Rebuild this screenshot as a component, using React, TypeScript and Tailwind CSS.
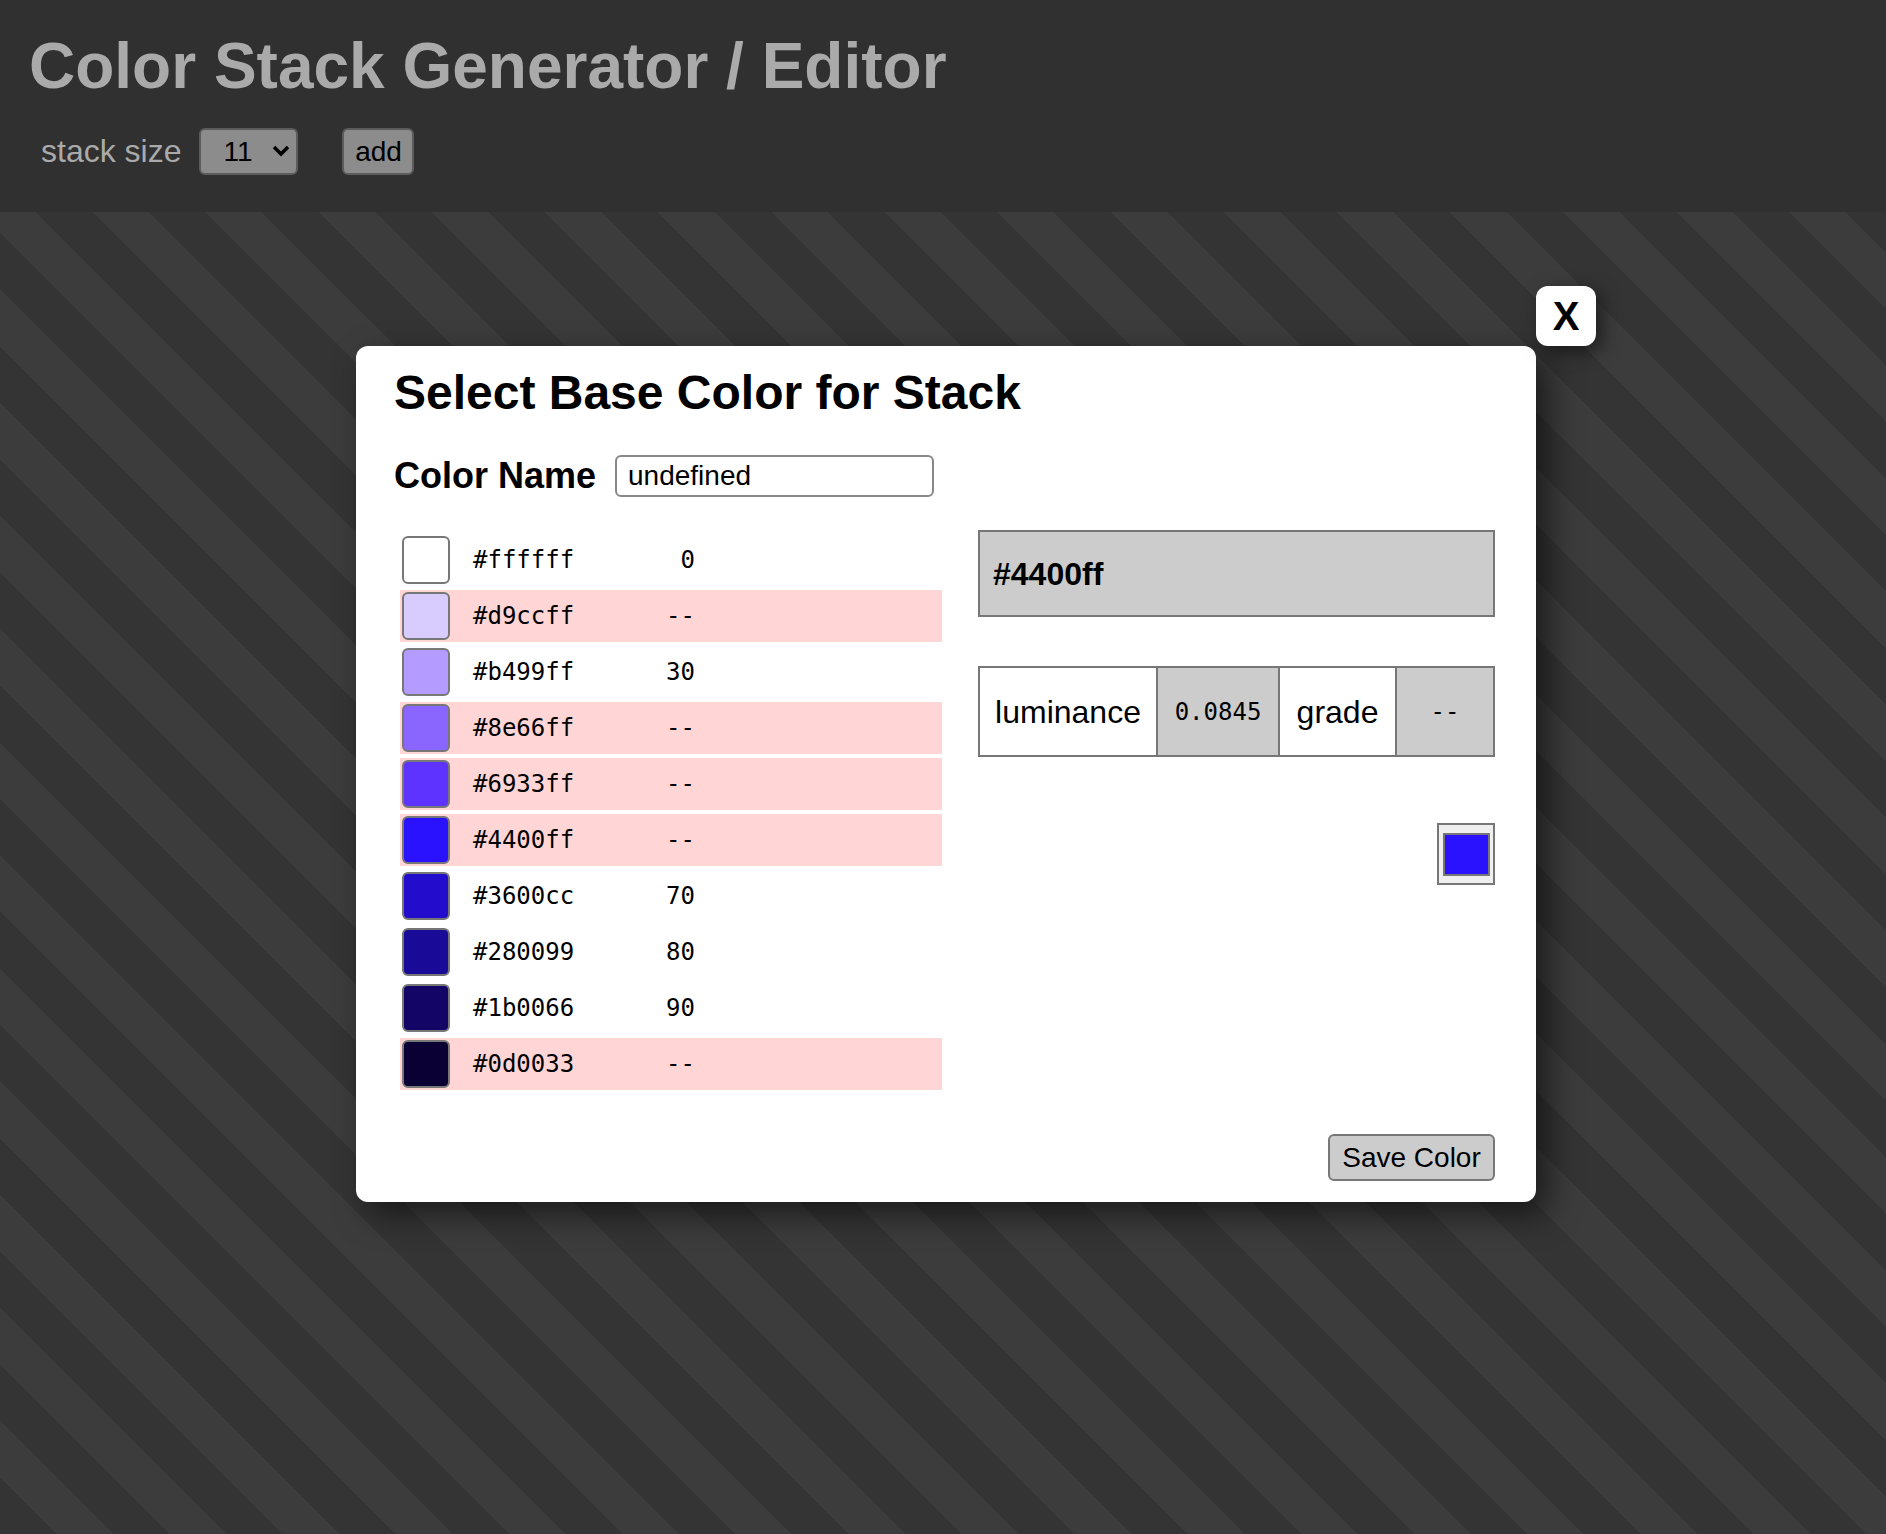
const stack = [
  { hex: "#ffffff", shown: "#ffffff", grade: "0", bad: false },
  { hex: "#d9ccff", shown: "#d8ccff", grade: "--", bad: true },
  { hex: "#b499ff", shown: "#b39bff", grade: "30", bad: false },
  { hex: "#8e66ff", shown: "#8a66ff", grade: "--", bad: true },
  { hex: "#6933ff", shown: "#5e33ff", grade: "--", bad: true },
  { hex: "#4400ff", shown: "#2b12ff", grade: "--", bad: true },
  { hex: "#3600cc", shown: "#230ccb", grade: "70", bad: false },
  { hex: "#280099", shown: "#1a0a98", grade: "80", bad: false },
  { hex: "#1b0066", shown: "#130566", grade: "90", bad: false },
  { hex: "#0d0033", shown: "#0a0033", grade: "--", bad: true },
];

function StackRow({ row }: { row: (typeof stack)[number] }) {
  return (
    <div
      className={`flex h-[52px] items-center ${row.bad ? "bg-[#ffd5d5]" : ""}`}
    >
      <div
        className="ml-[2px] h-[48px] w-[48px] rounded-[6px] border-2 border-[#777]"
        style={{ backgroundColor: row.shown }}
      />
      <span className="ml-[23px] w-[160px] text-[24px]">{row.hex}</span>
      <span className="w-[62px] text-right text-[24px]">{row.grade}</span>
    </div>
  );
}

export default function App() {
  return (
    <div className="flex min-h-screen flex-col bg-[#303030] font-['Liberation_Sans',Arial,sans-serif]">
      <header className="h-[212px] shrink-0 bg-[#303030] pl-[29px] pt-[34px]">
        <h1 className="text-[64px] font-bold leading-[64px] text-[#aaa]">
          Color Stack Generator / Editor
        </h1>
        <div className="mt-[30px] flex items-center pl-[12px]">
          <span className="text-[32px] leading-[47px] text-[#aaa]">stack size</span>
          <div className="relative ml-[18px]">
            <select
              defaultValue="11"
              className="h-[47px] w-[99px] appearance-none rounded-[6px] border-2 border-[#5c5c5c] bg-[#8c8c8c] pl-[22px] text-[28px] text-black outline-none"
            >
              <option value="11">11</option>
            </select>
            <svg
              className="pointer-events-none absolute right-[8px] top-[17px]"
              width="18"
              height="12"
              viewBox="0 0 18 12"
            >
              <path d="M2 2 L9 9 L16 2" fill="none" stroke="#000" strokeWidth="3.5" />
            </svg>
          </div>
          <button className="ml-[44px] h-[47px] w-[72px] rounded-[6px] border-2 border-[#5c5c5c] bg-[#8c8c8c] text-[28px] text-black">
            add
          </button>
        </div>
      </header>

      <main className="flex flex-1 justify-center bg-[repeating-linear-gradient(45deg,#343434_0px,#343434_40px,#3c3c3c_40px,#3c3c3c_80px)] pb-[160px] pl-[6px] pt-[134px]">
        <div className="relative h-fit">
          <button className="absolute right-[-60px] top-[-60px] flex h-[60px] w-[60px] items-center justify-center rounded-[12px] bg-white text-[40px] font-bold leading-none text-black shadow-[6px_6px_18px_rgba(0,0,0,0.5)]">
            X
          </button>

          <div className="w-[1180px] rounded-[12px] bg-white pb-[21px] pl-[38px] pr-[41px] pt-[19px] text-black shadow-[12px_12px_32px_rgba(0,0,0,0.55)]">
            <h2 className="text-[48px] font-bold leading-[56px]">
              Select Base Color for Stack
            </h2>

            <div className="mt-[34px] flex h-[42px] items-center">
              <label className="text-[36px] font-bold leading-[42px]">Color Name</label>
              <input
                defaultValue="undefined"
                className="ml-[19px] h-[42px] w-[319px] rounded-[6px] border-2 border-[#888] px-[11px] text-[28px] leading-[38px] outline-none"
              />
            </div>

            <div className="mt-[33px] flex items-start">
              <div className="ml-[6px] flex w-[542px] flex-col gap-[4px] pt-[4px] font-['DejaVu_Sans_Mono',monospace]">
                {stack.map((row) => (
                  <StackRow key={row.hex} row={row} />
                ))}
              </div>

              <div className="ml-auto flex w-[517px] flex-col">
                <div className="flex h-[87px] items-center border-2 border-[#777] bg-[#ccc] pl-[13px] text-[32px] font-bold">
                  #4400ff
                </div>

                <div className="mt-[49px] flex h-[91px] border-2 border-[#777]">
                  <div className="flex w-[176px] items-center justify-center bg-white text-[32px]">
                    luminance
                  </div>
                  <div className="flex w-[122px] items-center justify-center border-l-2 border-[#777] bg-[#ccc] font-['DejaVu_Sans_Mono',monospace] text-[24px]">
                    0.0845
                  </div>
                  <div className="flex w-[117px] items-center justify-center border-l-2 border-[#777] bg-white text-[32px]">
                    grade
                  </div>
                  <div className="flex flex-1 items-center justify-center border-l-2 border-[#777] bg-[#ccc] font-['DejaVu_Sans_Mono',monospace] text-[24px]">
                    --
                  </div>
                </div>

                <div className="mt-[66px] flex justify-end">
                  <div className="flex h-[62px] w-[58px] items-center justify-center border-2 border-[#777] bg-[#efefef]">
                    <div className="h-[43px] w-[47px] border-2 border-[#777] bg-[#2b12ff]" />
                  </div>
                </div>
              </div>
            </div>

            <div className="mt-[44px] flex justify-end">
              <button className="h-[47px] w-[167px] rounded-[6px] border-2 border-[#777] bg-[#ccc] text-[28px] text-black">
                Save Color
              </button>
            </div>
          </div>
        </div>
      </main>
    </div>
  );
}
